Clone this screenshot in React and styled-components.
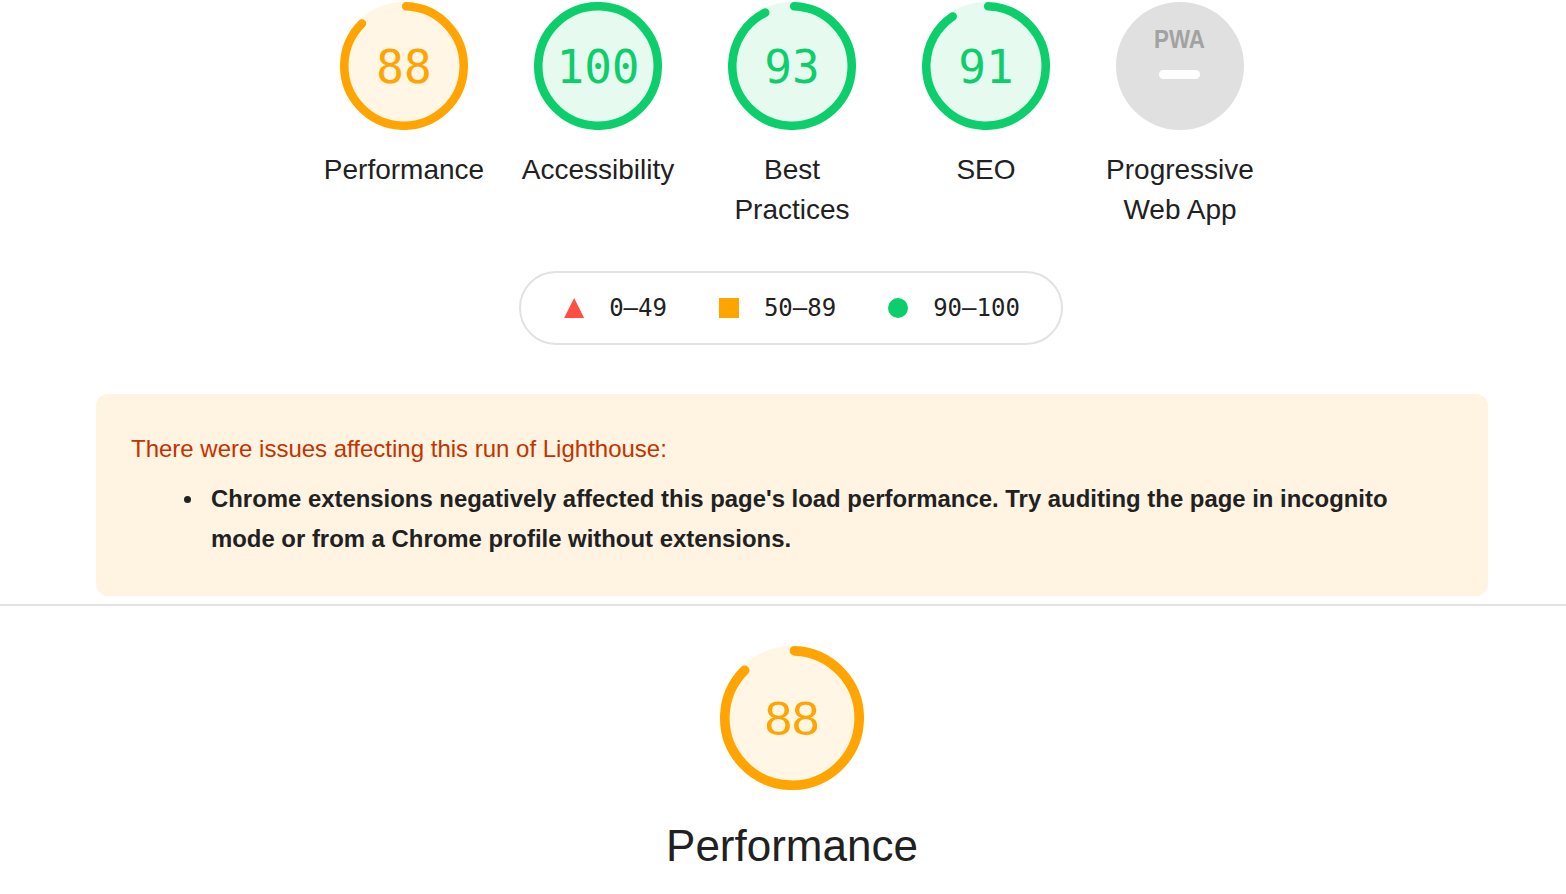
import React from "react";
import styled, { createGlobalStyle } from "styled-components";

const Global = createGlobalStyle`
  html, body { margin: 0; padding: 0; background: #fff; }
  body {
    font-family: "Liberation Sans", Arial, Helvetica, sans-serif;
    color: #212121;
    -webkit-font-smoothing: antialiased;
  }
  * { box-sizing: border-box; }
`;

const COLORS = {
  pass: "#0cce6b",
  average: "#ffa400",
  fail: "#ff4e42",
};

const Page = styled.div`
  width: 1566px;
  height: 894px;
  overflow: hidden;
  display: flex;
  flex-direction: column;
`;

const Content = styled.div`
  padding: 0 78px 0 96px;
  display: flex;
  flex-direction: column;
  align-items: center;
`;

const GaugeRow = styled.div`
  display: flex;
  justify-content: center;
  padding-top: 2px;
`;

const GaugeItem = styled.div`
  width: 194px;
  display: flex;
  flex-direction: column;
  align-items: center;
`;

const GaugeStack = styled.div`
  display: grid;
  width: ${(p) => p.$size}px;
  height: ${(p) => p.$size}px;
  & > * {
    grid-area: 1 / 1;
  }
`;

const Percentage = styled.div`
  display: flex;
  align-items: center;
  justify-content: center;
  font-family: ${(p) =>
    p.$mono
      ? `"DejaVu Sans Mono", Menlo, monospace`
      : `"Liberation Sans", Arial, sans-serif`};
  font-size: ${(p) => p.$fontSize}px;
  color: ${(p) => p.$color};
  line-height: 1;
  padding-top: ${(p) => p.$nudge || 0}px;
`;

const GaugeLabel = styled.div`
  margin-top: 20px;
  font-size: 28px;
  line-height: 40px;
  text-align: center;
  color: #212121;
`;

const Legend = styled.div`
  margin-top: 41px;
  height: 74px;
  border: 2px solid #e2e2e2;
  border-radius: 37px;
  display: flex;
  align-items: center;
  gap: 52px;
  padding: 0 41px 0 43px;
  margin-left: -2px;
`;

const LegendItem = styled.div`
  display: flex;
  align-items: center;
  gap: 25px;
  font-family: "DejaVu Sans Mono", Menlo, monospace;
  font-size: 24px;
  color: #212121;
`;

const Shape = styled.span`
  display: inline-block;
  width: 20px;
  height: 20px;
  background: ${(p) => p.$color};
  border-radius: ${(p) => (p.$round ? "50%" : "0")};
  clip-path: ${(p) =>
    p.$triangle ? "polygon(50% 0, 100% 100%, 0 100%)" : "none"};
`;

const Warning = styled.div`
  align-self: stretch;
  margin-top: 49px;
  background: #fff3e1;
  border-radius: 12px;
  padding: 39px 60px 37px 35px;
`;

const WarningTitle = styled.div`
  font-size: 24px;
  line-height: 32px;
  color: #c33300;
`;

const WarningList = styled.ul`
  margin: 14px 0 0 0;
  padding-left: 80px;
  list-style: none;
`;

const WarningItem = styled.li`
  position: relative;
  font-size: 23.9px;
  line-height: 40px;
  font-weight: 700;
  color: #212121;
  &::before {
    content: "";
    position: absolute;
    left: -27px;
    top: 17px;
    width: 7px;
    height: 7px;
    border-radius: 50%;
    background: #212121;
  }
`;

const Divider = styled.hr`
  margin: 8px 0 0 0;
  border: none;
  height: 2px;
  background: #e2e2e2;
  width: 100%;
`;

const CategorySection = styled.div`
  padding: 40px 78px 0 96px;
  display: flex;
  flex-direction: column;
  align-items: center;
`;

const CategoryTitle = styled.div`
  margin-top: 30px;
  font-size: 44px;
  line-height: 52px;
  color: #212121;
`;

function Gauge({ score, size, mono = true, fontSize, nudge }) {
  const color =
    score >= 90 ? COLORS.pass : score >= 50 ? COLORS.average : COLORS.fail;
  const r = 56;
  const sw = 8;
  const circ = Math.PI * 2 * r;
  const pct = score / 100;
  const adj = (0.25 * sw) / circ;
  const rot = -90 + adj * 360;
  const arcLen = pct === 1 ? circ : Math.max(pct * circ - sw / 2, 0);
  return (
    <GaugeStack $size={size}>
      <svg width={size} height={size} viewBox="0 0 120 120">
        <circle cx="60" cy="60" r="60" fill={color} opacity="0.1" />
        <circle
          cx="60"
          cy="60"
          r={r}
          fill="none"
          stroke={color}
          strokeWidth={sw}
          strokeLinecap="round"
          strokeDasharray={`${arcLen} ${circ}`}
          transform={`rotate(${rot} 60 60)`}
        />
      </svg>
      <Percentage
        $mono={mono}
        $fontSize={fontSize}
        $color={color}
        $nudge={nudge}
      >
        {score}
      </Percentage>
    </GaugeStack>
  );
}

function PwaGauge({ size }) {
  return (
    <GaugeStack $size={size}>
      <svg width={size} height={size} viewBox="0 0 128 128">
        <circle cx="64" cy="64" r="64" fill="#e0e0e0" />
        <text
          x="38"
          y="46"
          fontFamily="Liberation Sans, Arial, sans-serif"
          fontWeight="700"
          fontSize="26"
          fill="#a2a2a2"
          textLength="51"
          lengthAdjust="spacingAndGlyphs"
        >
          PWA
        </text>
        <rect x="43" y="68" width="41" height="9" rx="4.5" fill="#fff" />
      </svg>
    </GaugeStack>
  );
}

const categories = [
  { score: 88, label: ["Performance"] },
  { score: 100, label: ["Accessibility"] },
  { score: 93, label: ["Best", "Practices"] },
  { score: 91, label: ["SEO"] },
];

export default function App() {
  return (
    <Page>
      <Global />
      <Content>
        <GaugeRow>
          {categories.map((c) => (
            <GaugeItem key={c.label.join(" ")}>
              <Gauge score={c.score} size={128} fontSize={46} nudge={2} />
              <GaugeLabel>
                {c.label.map((l, i) => (
                  <React.Fragment key={l}>
                    {i > 0 && <br />}
                    {l}
                  </React.Fragment>
                ))}
              </GaugeLabel>
            </GaugeItem>
          ))}
          <GaugeItem>
            <PwaGauge size={128} />
            <GaugeLabel>
              Progressive
              <br />
              Web App
            </GaugeLabel>
          </GaugeItem>
        </GaugeRow>

        <Legend>
          <LegendItem>
            <Shape $color={COLORS.fail} $triangle />
            0–49
          </LegendItem>
          <LegendItem>
            <Shape $color={COLORS.average} />
            50–89
          </LegendItem>
          <LegendItem>
            <Shape $color={COLORS.pass} $round />
            90–100
          </LegendItem>
        </Legend>

        <Warning>
          <WarningTitle>There were issues affecting this run of Lighthouse:</WarningTitle>
          <WarningList>
            <WarningItem>
              Chrome extensions negatively affected this page's load
              performance. Try auditing the page in incognito mode or from a
              Chrome profile without extensions.
            </WarningItem>
          </WarningList>
        </Warning>
      </Content>
      <Divider />
      <CategorySection>
        <Gauge score={88} size={144} mono={false} fontSize={49} nudge={0} />
        <CategoryTitle>Performance</CategoryTitle>
      </CategorySection>
    </Page>
  );
}
